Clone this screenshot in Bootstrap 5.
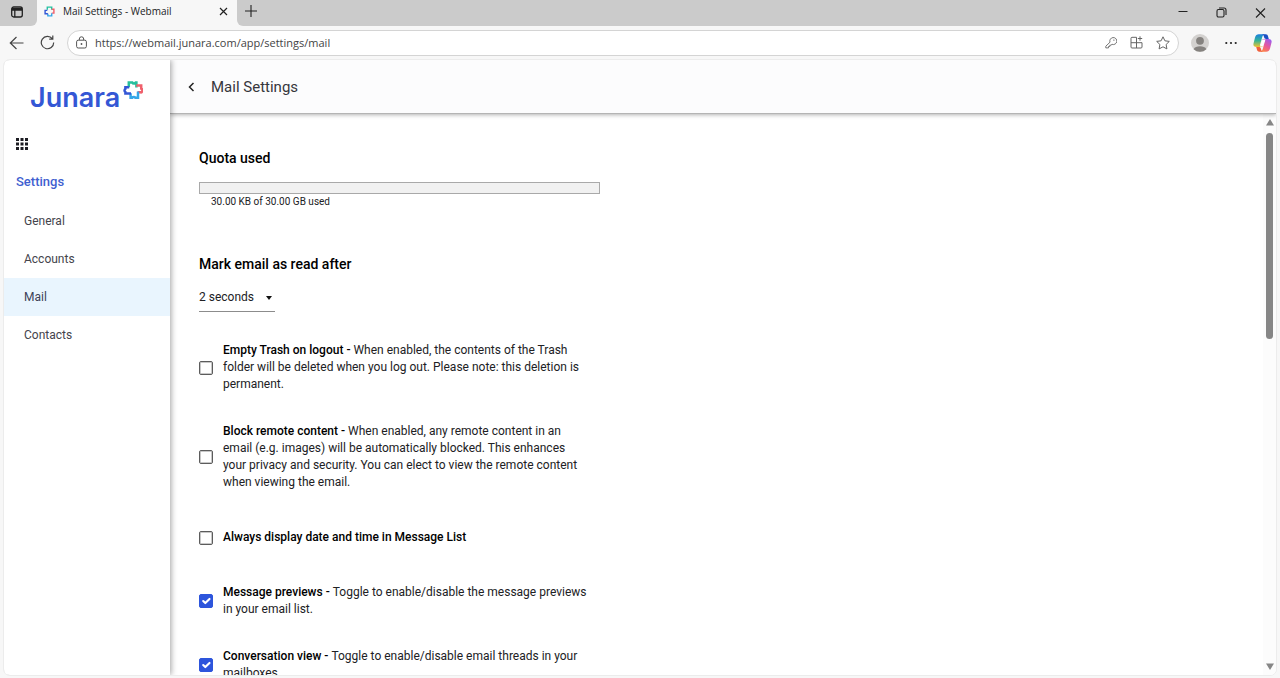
<!DOCTYPE html>
<html lang="en">
<head>
<meta charset="utf-8">
<meta name="viewport" content="width=device-width, initial-scale=1">
<title>Mail Settings - Webmail</title>
<link href="https://cdn.jsdelivr.net/npm/bootstrap@5.3.0/dist/css/bootstrap.min.css" rel="stylesheet">
<style>
  body { font-family: Roboto, sans-serif; font-size: 12px; line-height: 17px; color: #212124; background: #f7f7f7; }
  svg { display: block; flex: none; }
  .chrome-ui { font-family: "Open Sans", sans-serif; color: #222; }
  .plain-btn { background: none; border: 0; padding: 0; color: inherit; display: flex; align-items: center; justify-content: center; }

  .tab-strip { height: 26px; background: #cbcbcb; }
  .tab-menu { width: 37px; height: 26px; background: #cbcbcb; border-bottom-right-radius: 6px; padding: 0 4px 3px 0; }
  .tab-strip-rest { background: #cbcbcb; border-bottom-left-radius: 6px; }
  .tab-fill { background: #f7f7f7; }
  .browser-tab { width: 200px; background: #f7f7f7; font-size: 10px; padding: 0 9px 3px 7px; }
  .window-btns { gap: 28px; padding: 0 14px 2px 0; }

  .toolbar { height: 33px; padding: 0 8px 0 9px; }
  .address { height: 26px; border: 1px solid #d4d4d4; border-radius: 13px; background: #fff; margin-left: 12px; padding: 0 8px; }
  .address input { border: 0; outline: 0; background: none; padding: 0; font-size: 11px; color: #444; min-width: 0; }
  .address-tools { gap: 13px; }

  .page-frame { margin: 0 3px 2px 3px; border: 1px solid #ececec; border-radius: 7px; background: #fff; min-height: 0; }
  .sidebar { width: 166px; background: #fff; box-shadow: 1px 0 6px rgba(0,0,0,.38); z-index: 3; }
  .brand { height: 67px; padding: 20px 0 0 26px; color: #3457d5; text-decoration: none; }
  .brand-word { font-family: Inter, sans-serif; font-weight: 600; font-size: 27px; line-height: 36px; }
  .brand-mark { margin-left: 3px; }
  .apps-btn { padding: 11px 12px 10px; }
  .side-title { font-size: 13px; font-weight: 500; color: #3f5fd0; padding: 13px 13px 11px 12px; line-height: 18px; margin: 0; }
  .side-link { height: 38px; padding-left: 20px; color: #44444c; text-decoration: none; display: flex; align-items: center; }
  .side-link.current { background: #e9f5fe; color: #3c4258; }

  .app-header { height: 54px; background: #fcfcfd; border-bottom: 1px solid #b4b4b4; box-shadow: 0 1px 4px rgba(0,0,0,.3); padding-left: 17px; z-index: 2; }
  .app-header h1 { font-size: 15px; line-height: 20px; font-weight: 400; margin: 0; color: #36363c; }
  .scroller { overflow-y: auto; scrollbar-width: none; padding: 34px 29px 0; min-height: 0; }
  .scroller::-webkit-scrollbar { display: none; }
  .settings-col { max-width: 401px; }
  .section-title { font-size: 14px; line-height: 20px; font-weight: 500; color: #000; margin: 0; }
  .quota-track { height: 12px; background: #f1f1f1; border: 1px solid #a9a9a9; border-radius: 0; margin-top: 14px; }
  .quota-note { font-size: 10px; line-height: 16px; padding-left: 12px; margin-bottom: 44px; }
  .delay-wrap { width: 76px; border-bottom: 1px solid #8c8c8c; margin-top: 13px; padding-bottom: 4px; position: relative; }
  .delay-wrap select { appearance: none; border: 0; background: none; padding: 0; width: 100%; height: 20px; color: #212124; outline: 0; display: block; }
  .delay-caret { position: absolute; right: 3px; top: 9px; width: 0; border: 3px solid transparent; border-top: 4px solid #111; border-bottom: 0; pointer-events: none; }
  .option-list { gap: 30px; margin-top: 30px; padding-bottom: 24px; }
  .option { min-height: 33px; gap: 10px; max-width: 392px; }
  .option .form-check-input { width: 14px; height: 14px; margin: 0; border: 1px solid #5c5c5c; border-radius: 2px; flex: none; box-shadow: inset 0 0 0 1px #c8c8c8; }
  .option .form-check-input:checked { background-color: #2d55dc; border-color: #2d55dc; box-shadow: none; background-size: 14px 14px; }
  .option label { max-width: 364px; }
  .option strong { font-weight: 500; color: #000; }
  .scroll-rail { width: 13px; background: #fcfcfc; padding: 5px 0 5px; }
  .scroll-thumb { width: 7px; height: 206px; border-radius: 4px; background: #868686; margin-top: 7px; }
</style>
</head>
<body class="vh-100 d-flex flex-column overflow-hidden">

<div class="chrome-ui">
  <div class="tab-strip d-flex">
    <div class="tab-fill">
      <button class="tab-menu plain-btn" aria-label="Tab actions">
        <svg width="12" height="12" viewBox="0 0 12 12" fill="none" stroke="#222" stroke-width="1.3"><rect x=".7" y="1" width="10.6" height="10" rx="2"/><path d="M1 2.6h10M1 4h10M3.8 4v7" /></svg>
      </button>
    </div>
    <div class="browser-tab d-flex align-items-center">
      <svg width="11" height="11" viewBox="0 0 20 20" fill="none" stroke-width="2.6"><path d="M6 7V2h8v5" stroke="#25c2a0"/><path d="M14 6h4v7h-4" stroke="#f0606c"/><path d="M14 13v5H7v-4" stroke="#35a7e8"/><path d="M7 14H2V8h4" stroke="#3457d5"/></svg>
      <span class="ms-2 flex-grow-1">Mail Settings - Webmail</span>
      <button class="plain-btn" aria-label="Close tab"><svg width="9" height="9" viewBox="0 0 9 9" stroke="#222" stroke-width="1.2"><path d="M1 1l7 7M8 1L1 8"/></svg></button>
    </div>
    <div class="tab-fill flex-grow-1 d-flex">
      <div class="tab-strip-rest flex-grow-1 d-flex align-items-center justify-content-between ps-2">
        <button class="plain-btn pb-1" aria-label="New tab"><svg width="12" height="12" viewBox="0 0 12 12" stroke="#222" stroke-width="1.1"><path d="M6 0v12M0 6h12"/></svg></button>
        <div class="window-btns d-flex align-items-center">
          <button class="plain-btn" aria-label="Minimize"><svg width="10" height="10" viewBox="0 0 10 10" stroke="#222" stroke-width="1"><path d="M.5 4.5h9"/></svg></button>
          <button class="plain-btn" aria-label="Restore"><svg width="11" height="11" viewBox="0 0 11 11" fill="none" stroke="#222" stroke-width="1.1"><rect x="1" y="2.5" width="7" height="7.5" rx="1.4"/><path d="M3 1h5a2 2 0 0 1 2 2v5"/></svg></button>
          <button class="plain-btn" aria-label="Close window"><svg width="11" height="11" viewBox="0 0 11 11" stroke="#222" stroke-width="1.1"><path d="M1 1.5l9 9M10 1.5l-9 9"/></svg></button>
        </div>
      </div>
    </div>
  </div>

  <div class="toolbar d-flex align-items-center">
    <button class="plain-btn" aria-label="Back"><svg width="15" height="14" viewBox="0 0 15 14" fill="none" stroke="#444" stroke-width="1.2"><path d="M14.500 7H1.500M7.500 1L1.300 7l6.200 6"/></svg></button>
    <button class="plain-btn ms-3" aria-label="Refresh"><svg width="15" height="15" viewBox="0 0 15 15" fill="none" stroke="#444" stroke-width="1.2"><path d="M12.300 3.600A6.200 6.200 0 1 0 13.700 7.500M12.800 0.600v3.600H9.200"/></svg></button>
    <div class="address flex-grow-1 d-flex align-items-center">
      <svg width="11" height="13" viewBox="0 0 11 13" fill="none" stroke="#555" stroke-width="1"><rect x=".6" y="4.200" width="9.800" height="7.800" rx="1.600"/><path d="M3.300 4V3a2.200 2.200 0 0 1 4.400 0v1"/><circle cx="5.500" cy="8" r=".9" fill="#555" stroke="none"/></svg>
      <input class="flex-grow-1 ms-2" type="text" aria-label="Address" value="https://webmail.junara.com/app/settings/mail">
      <div class="address-tools d-flex align-items-center">
        <button class="plain-btn" aria-label="Passwords"><svg width="12" height="12" viewBox="0 0 12 12" fill="none" stroke="#666" stroke-width=".9"><path d="M5 5.200A3.500 3.500 0 1 1 7 7.300L6 8.200H4.800v1.300H3.500v1.400H.8V9.200z"/><circle cx="8.900" cy="3.100" r=".7" fill="#666" stroke="none"/></svg></button>
        <button class="plain-btn" aria-label="Apps"><svg width="13" height="13" viewBox="0 0 13 13" fill="none" stroke="#666" stroke-width="1"><path d="M6.500 12V1.300H2a1 1 0 0 0-1 1V11a1 1 0 0 0 1 1h9a1 1 0 0 0 1-1V6.700H1M10 .3v4.400M7.800 2.500h4.400"/></svg></button>
        <button class="plain-btn" aria-label="Favourite"><svg width="14" height="14" viewBox="0 0 14 14" fill="none" stroke="#666" stroke-width="1" stroke-linejoin="round"><path d="M7 .8l1.900 4 4.400.6-3.200 3.100.8 4.400L7 10.800l-3.900 2.100.8-4.400L.7 5.400l4.400-.6z"/></svg></button>
      </div>
    </div>
    <button class="plain-btn ms-2 ps-1" aria-label="Profile"><svg width="18" height="18" viewBox="0 0 18 18"><circle cx="9" cy="9" r="9" fill="#d3d1cf"/><circle cx="9" cy="6.800" r="3.900" fill="#85827f"/><path d="M2.700 15.200C4 11.400 14 11.400 15.300 15.200A9 9 0 0 1 2.700 15.200z" fill="#85827f"/></svg></button>
    <button class="plain-btn ms-3" aria-label="More"><svg width="12" height="4" viewBox="0 0 12 4" fill="#222"><circle cx="1.300" cy="2" r="1.100"/><circle cx="6" cy="2" r="1.100"/><circle cx="10.700" cy="2" r="1.100"/></svg></button>
    <button class="plain-btn ms-3" aria-label="Copilot">
      <svg width="19" height="18" viewBox="0 0 19 18">
        <defs>
          <linearGradient id="cpA" x1="0" y1="0" x2="0" y2="1"><stop offset="0" stop-color="#1a7fe0"/><stop offset=".5" stop-color="#35b596"/><stop offset="1" stop-color="#f2c230"/></linearGradient>
          <linearGradient id="cpB" x1="0.800" y1="0" x2="0.200" y2="1"><stop offset="0" stop-color="#9a5cf0"/><stop offset=".5" stop-color="#e8589c"/><stop offset="1" stop-color="#ff8a3c"/></linearGradient>
        </defs>
        <path d="M9 5h6.500c2.500 0 3.500 1.500 3 3.500l-1.500 6c-.7 2.200-1.800 3.200-3.800 3.200H6.500c2 0 2.800-1.200 3.300-3L12 7z" fill="url(#cpB)"/>
        <path d="M10 13H3.500C1 13 0 11.500.500 9.500L2 3.500C2.700 1.300 3.800.300 5.800.300h6.700c-2 0-2.800 1.200-3.300 3L7 11z" fill="url(#cpA)"/>
        <path d="M8.500.300h4.200c1.500 0 2 .8 2.400 2.200L15.800 5h-2.600c-1.300 0-1.800-.5-2.100-1.700C10.700 1.500 10 .3 8.500.3z" fill="#1c4fc4"/>
        <path d="M10.500 17.700H6.300c-1.500 0-2-.8-2.400-2.200L3.200 13h2.600c1.300 0 1.800.5 2.100 1.700.4 1.800 1.100 3 2.600 3z" fill="#f0603c"/>
        <path d="M10 5.500h2.600L9.200 12.500H6.800z" fill="#fff"/>
      </svg>
    </button>
  </div>
</div>

<div class="page-frame flex-grow-1 d-flex overflow-hidden">
  <nav class="sidebar flex-shrink-0 position-relative" aria-label="Settings">
    <a class="brand d-flex align-items-start" href="#" aria-label="Junara home">
      <span class="brand-word">Junara</span>
      <svg class="brand-mark" width="20" height="20" viewBox="0 0 20 20" fill="none" stroke-width="2.500"><path d="M5.800 7.200V2.400h3.400a2 2 0 0 0 3.600 0h.6v5" stroke="#25bf9c"/><path d="M13.300 5.500H18.200v3.200a1.800 1.800 0 0 1-1.300 3.500H14.600" stroke="#f0606c"/><path d="M15 11.500v6.300h-2.600a2 2 0 0 0-3.300 0H7.600v-4.600" stroke="#35a7e8"/><path d="M8 13.600H2.400v-1.500a2 2 0 0 1 0-3.300V7.300h3.800" stroke="#3457d5"/></svg>
    </a>
    <button class="plain-btn apps-btn" aria-label="Apps menu">
      <svg width="12" height="12" viewBox="0 0 12 12" fill="#1c1c22"><path d="M0 0h3v3H0zM4.500 0h3v3h-3zM9 0h3v3H9zM0 4.500h3v3H0zM4.500 4.500h3v3h-3zM9 4.500h3v3H9zM0 9h3v3H0zM4.500 9h3v3h-3zM9 9h3v3H9z"/></svg>
    </button>
    <h2 class="side-title">Settings</h2>
    <a class="side-link" href="#">General</a>
    <a class="side-link" href="#">Accounts</a>
    <a class="side-link current" href="#" aria-current="page">Mail</a>
    <a class="side-link" href="#">Contacts</a>
  </nav>

  <main class="flex-grow-1 d-flex flex-column">
    <header class="app-header flex-shrink-0 d-flex align-items-center position-relative">
      <button class="plain-btn me-3" aria-label="Go back"><svg width="8" height="10" viewBox="0 0 8 10" fill="none" stroke="#222" stroke-width="1.500"><path d="M6.500 1L2.500 5l4 4"/></svg></button>
      <h1>Mail Settings</h1>
    </header>
    <div class="flex-grow-1 d-flex overflow-hidden">
      <div class="scroller flex-grow-1">
        <div class="settings-col">
          <h2 class="section-title">Quota used</h2>
          <div class="progress quota-track" role="progressbar" aria-label="Quota used" aria-valuenow="0" aria-valuemin="0" aria-valuemax="100"></div>
          <div class="quota-note">30.00 KB of 30.00 GB used</div>

          <label class="section-title d-block" for="delay">Mark email as read after</label>
          <div class="delay-wrap">
            <select id="delay"><option>2 seconds</option><option>5 seconds</option><option>10 seconds</option></select>
            <span class="delay-caret"></span>
          </div>

          <div class="option-list d-flex flex-column">
            <div class="option d-flex align-items-center">
              <input class="form-check-input" type="checkbox" id="trash">
              <label for="trash"><strong>Empty Trash on logout - </strong>When enabled, the contents of the Trash folder will be deleted when you log out. Please note: this deletion is permanent.</label>
            </div>
            <div class="option d-flex align-items-center">
              <input class="form-check-input" type="checkbox" id="remote">
              <label for="remote"><strong>Block remote content - </strong>When enabled, any remote content in an email (e.g. images) will be automatically blocked. This enhances your privacy and security. You can elect to view the remote content when viewing the email.</label>
            </div>
            <div class="option d-flex align-items-center">
              <input class="form-check-input" type="checkbox" id="dates">
              <label for="dates"><strong>Always display date and time in Message List</strong></label>
            </div>
            <div class="option d-flex align-items-center">
              <input class="form-check-input" type="checkbox" id="previews" checked>
              <label for="previews"><strong>Message previews - </strong>Toggle to enable/disable the message previews in your email list.</label>
            </div>
            <div class="option d-flex align-items-center">
              <input class="form-check-input" type="checkbox" id="threads" checked>
              <label for="threads"><strong>Conversation view - </strong>Toggle to enable/disable email threads in your mailboxes.</label>
            </div>
          </div>
        </div>
      </div>
      <div class="scroll-rail flex-shrink-0 d-flex flex-column align-items-center" aria-hidden="true">
        <svg width="8" height="7" viewBox="0 0 8 7" fill="#868686"><path d="M4 0l4 6.500H0z"/></svg>
        <div class="scroll-thumb"></div>
        <svg class="mt-auto" width="8" height="7" viewBox="0 0 8 7" fill="#868686"><path d="M4 7L0 .5h8z"/></svg>
      </div>
    </div>
  </main>
</div>

<script src="https://cdn.jsdelivr.net/npm/bootstrap@5.3.0/dist/js/bootstrap.bundle.min.js"></script>
</body>
</html>
